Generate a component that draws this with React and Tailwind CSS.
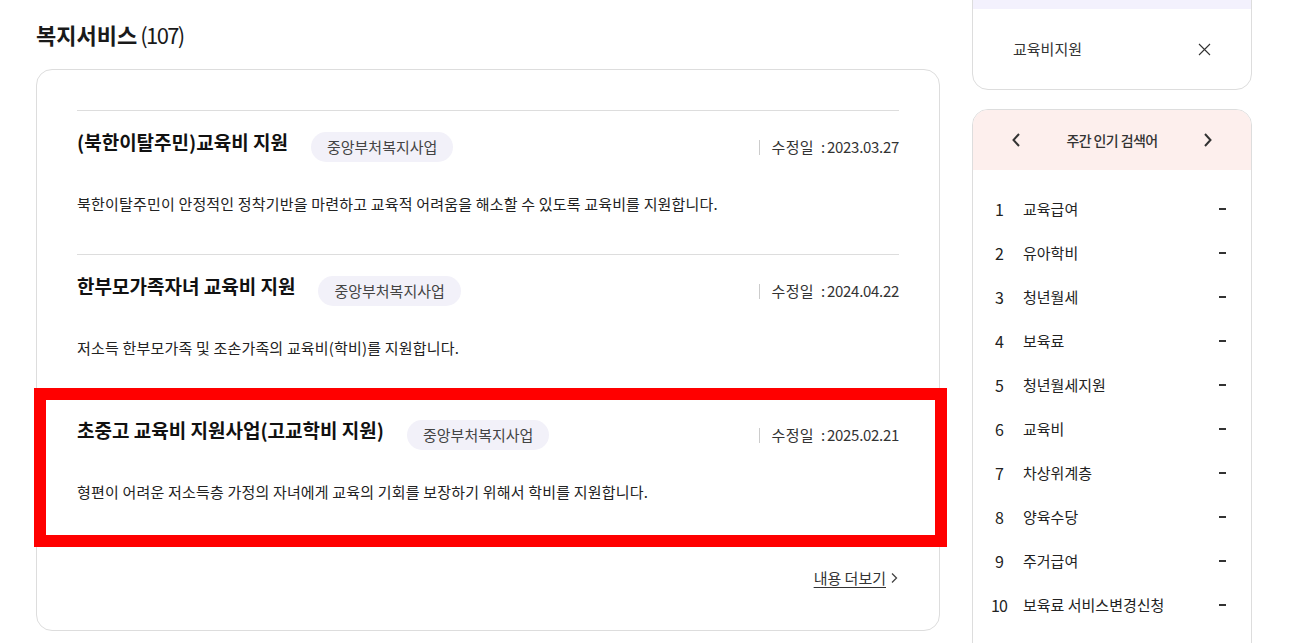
import React from "react";

const items = [
  {
    title: "(북한이탈주민)교육비 지원",
    date: "2023.03.27",
    desc: "북한이탈주민이 안정적인 정착기반을 마련하고 교육적 어려움을 해소할 수 있도록 교육비를 지원합니다.",
  },
  {
    title: "한부모가족자녀 교육비 지원",
    date: "2024.04.22",
    desc: "저소득 한부모가족 및 조손가족의 교육비(학비)를 지원합니다.",
  },
  {
    title: "초중고 교육비 지원사업(고교학비 지원)",
    date: "2025.02.21",
    desc: "형편이 어려운 저소득층 가정의 자녀에게 교육의 기회를 보장하기 위해서 학비를 지원합니다.",
    highlight: true,
  },
];

const ranks = [
  "교육급여",
  "유아학비",
  "청년월세",
  "보육료",
  "청년월세지원",
  "교육비",
  "차상위계층",
  "양육수당",
  "주거급여",
  "보육료 서비스변경신청",
];

function Item({ it }) {
  return (
    <div className="relative border-t border-[#dddddd] pt-[20px] pb-[38px]">
      <div className="flex items-start">
        <h3 className="text-[19px] leading-[22px] font-bold text-[#111]">
          {it.title}
        </h3>
        <span className="ml-[23px] mt-[1px] h-[30px] px-[16px] rounded-full bg-[#f2f1f9] text-[15px] leading-[30px] text-[#444]">
          중앙부처복지사업
        </span>
        <div className="ml-auto mt-[1px] flex items-center h-[30px]">
          <span className="w-px h-[15px] bg-[#cccccc]" />
          <span className="pl-[12px] text-[15px] text-[#333] tracking-[0.3px]">
            수정일
          </span>
          <span className="pl-[7px] pr-[2px] text-[15px] text-[#333]">:</span>
          <span className="text-[15px] text-[#333] tracking-[-0.3px]">
            {it.date}
          </span>
        </div>
      </div>
      <p className="mt-[30px] text-[15px] leading-[24px] text-[#222] tracking-[0.18px]">
        {it.desc}
      </p>
      {it.highlight && (
        <div className="absolute top-[-11px] left-[-43px] right-[-48px] bottom-[-5px] border-[12px] border-[#ff0000]" />
      )}
    </div>
  );
}

export default function App() {
  return (
    <div
      className="w-[1298px] h-[643px] overflow-hidden bg-white flex"
      style={{ fontFamily: '"Noto Sans CJK KR", "Noto Sans", sans-serif' }}
    >
      <main className="ml-[36px] w-[904px] pt-[19px]">
        <h2 className="h-[30px] flex items-center text-[22px] font-bold text-[#1a1a1a]">
          복지서비스
          <span className="ml-[3px] font-normal tracking-[-1.6px]">(107)</span>
        </h2>
        <div className="mt-[20px] border border-[#dddddd] rounded-[16px] px-[40px] pt-[40px] pb-[40px]">
          {items.map((it, i) => (
            <Item key={i} it={it} />
          ))}
          <div className="flex justify-end items-center h-[24px] mt-[24px]">
            <span className="text-[15px] text-[#333] underline underline-offset-[3px]">
              내용 더보기
            </span>
            <svg width="9" height="12" viewBox="0 0 9 12" className="ml-[4px]">
              <path d="M2 1.5 L6.5 6 L2 10.5" fill="none" stroke="#444" strokeWidth="1.3" />
            </svg>
          </div>
        </div>
      </main>
      <aside className="ml-[32px] w-[280px]">
        <div className="-mt-[42px] border border-[#dddddd] rounded-[16px] overflow-hidden">
          <div className="h-[50px] bg-[#f3f1fd]" />
          <div className="h-[80px] flex items-center pl-[40px] pr-[40px]">
            <span className="text-[15px] text-[#333]">교육비지원</span>
            <svg width="13" height="13" viewBox="0 0 13 13" className="ml-auto">
              <path d="M1 1 L12 12 M12 1 L1 12" stroke="#333" strokeWidth="1.1" />
            </svg>
          </div>
        </div>
        <div className="mt-[19px] border border-[#dddddd] rounded-t-[16px] overflow-hidden">
          <div className="h-[60px] bg-[#fdefed] flex items-center justify-between px-[38px]">
            <svg width="10" height="16" viewBox="0 0 10 16">
              <path d="M8 2 L2.5 8 L8 14" fill="none" stroke="#333" strokeWidth="2" />
            </svg>
            <span className="text-[14px] font-medium text-[#333] tracking-[-0.6px]">
              주간 인기 검색어
            </span>
            <svg width="10" height="16" viewBox="0 0 10 16">
              <path d="M2 2 L7.5 8 L2 14" fill="none" stroke="#333" strokeWidth="2" />
            </svg>
          </div>
          <ul className="pt-[17px] pb-[20px] pl-[16px] pr-[25px]">
            {ranks.map((r, i) => (
              <li key={i} className="h-[44px] flex items-center">
                <span className="w-[20px] text-center text-[16px] text-[#222] tracking-[-0.8px]">
                  {i + 1}
                </span>
                <span className="ml-[14px] text-[15px] text-[#222]">
                  {r}
                </span>
                <span className="ml-auto w-[7px] h-[2px] bg-[#333]" />
              </li>
            ))}
          </ul>
        </div>
      </aside>
    </div>
  );
}
